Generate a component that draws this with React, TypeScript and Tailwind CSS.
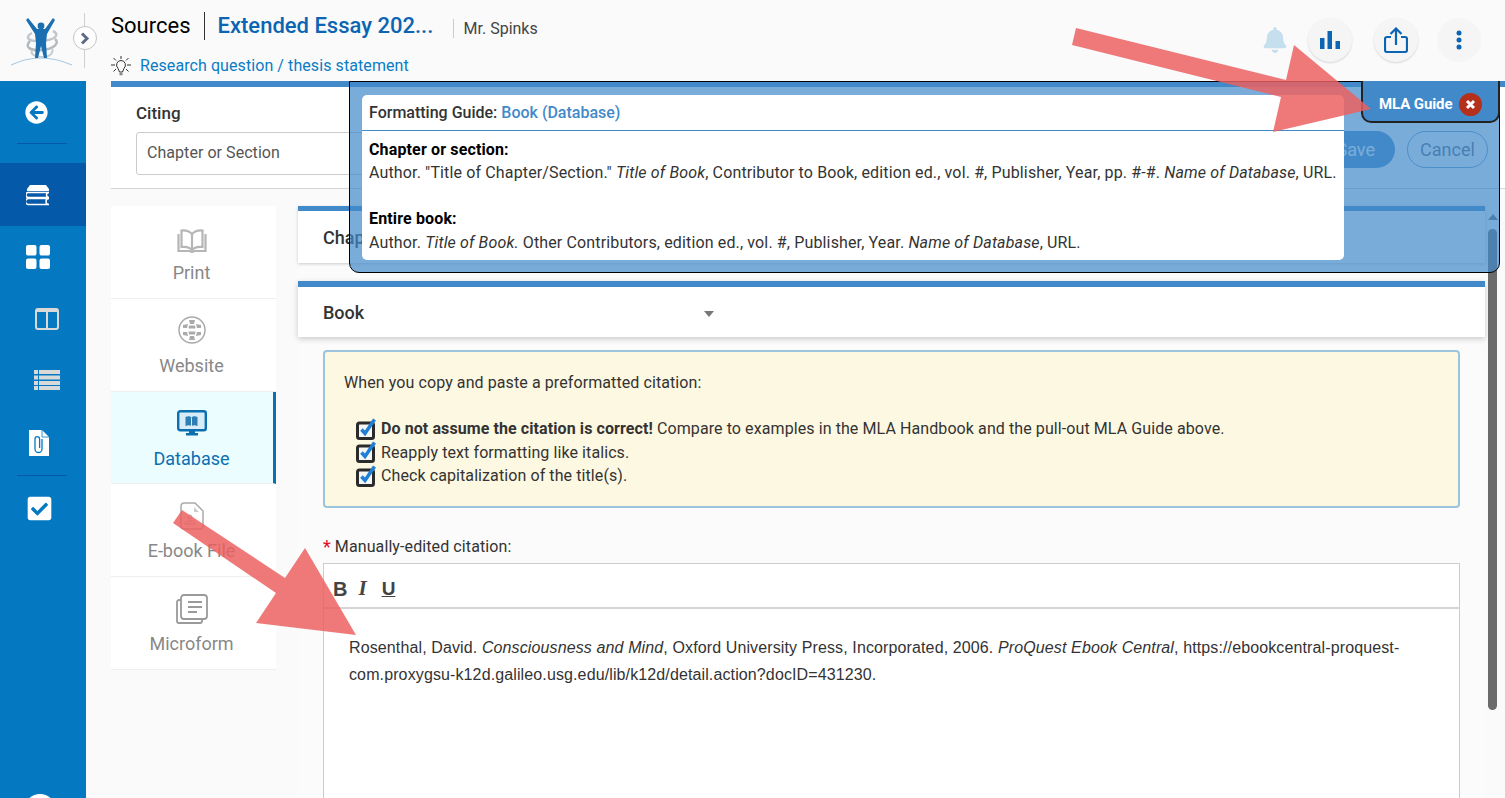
import { FaArrowCircleLeft, FaBell, FaCheckSquare } from 'react-icons/fa';

const Logo = () => (
    <svg width="64" height="50" viewBox="0 0 64 50" className="block">
        <path d="M1 48 Q30 34 62 48" fill="none" stroke="#a9cbe4" strokeWidth="1.200" />
        <path d="M22 16 C14 20 18 25 32 24 C46 23 50 17 43 14" fill="none" stroke="#c2c6ca" strokeWidth="2.500" />
        <path d="M20 24 C14 30 20 34 32 33 C44 32 50 26 45 22" fill="none" stroke="#b4b9bd" strokeWidth="2.500" />
        <path d="M22 33 C20 38 26 40 32 40 C40 40 44 36 42 31" fill="none" stroke="#c8ccd0" strokeWidth="2" />
        <circle cx="31" cy="9" r="3.400" fill="#1b6fb0" />
        <path d="M18 1 L27 12 L35 12 L43 1 L45 3 L37 17 L36 26 L37 41 L34 41 L31 29 L28 41 L25 41 L26 26 L25 17 L16 3 Z" fill="#1b6fb0" />
    </svg>
);

const Bulb = () => (
    <svg width="20" height="20" viewBox="0 0 20 20" fill="none" stroke="#333" strokeWidth="1" className="shrink-0">
        <path d="M10 0v3M0 9h4M16 9h4M2.500 2l2.500 2.500M17.500 2L15 4.500M2.500 15.500L5 13M17.500 15.500L15 13" />
        <path d="M10 4.500a4.500 4.500 0 0 0-3 7.800L8.500 16h3l1.500-3.700a4.500 4.500 0 0 0-3-7.800z" />
        <path d="M8.500 18h3" stroke="#888" strokeWidth="2.500" />
    </svg>
);

const Books = () => (
    <svg width="25" height="22" viewBox="0 0 25 22" fill="none" stroke="#fff">
        <path d="M4 1h16l3 4v2H1V5z" fill="#fff" stroke="none" />
        <path d="M2 8.500h21a2 2 0 0 0 0 5H3a2.500 2.500 0 0 1-1-5z" strokeWidth="1.500" />
        <path d="M3 14.500h20a2 2 0 0 0 0 6H2a3 3 0 0 1 1-6z" strokeWidth="1.500" />
    </svg>
);

const Grid = () => (
    <svg width="24" height="24" viewBox="0 0 24 24" fill="#fff">
        <rect x="0" y="0" width="10.500" height="10.500" rx="2" />
        <rect x="13.500" y="0" width="10.500" height="10.500" rx="2" />
        <rect x="0" y="13.500" width="10.500" height="10.500" rx="2" />
        <rect x="13.500" y="13.500" width="10.500" height="10.500" rx="2" />
    </svg>
);

const Columns = () => (
    <svg width="24" height="22" viewBox="0 0 24 22" fill="none" stroke="#d9d9d9" strokeWidth="2">
        <rect x="1" y="1" width="22" height="20" rx="2" />
        <path d="M12 1v20M1 3h22" />
    </svg>
);

const ListIcon = () => (
    <svg width="26" height="20" viewBox="0 0 26 20" fill="#d9d9d9">
        <rect x="0" y="0" width="4" height="4" />
        <rect x="5" y="0" width="21" height="4" />
        <rect x="0" y="5.500" width="4" height="4" />
        <rect x="5" y="5.500" width="21" height="4" />
        <rect x="0" y="11" width="4" height="4" />
        <rect x="5" y="11" width="21" height="4" />
        <rect x="0" y="16" width="4" height="4" />
        <rect x="5" y="16" width="21" height="4" />
    </svg>
);

const Attachment = () => (
    <svg width="20" height="26" viewBox="0 0 20 26">
        <path d="M0 0h13l7 7v19H0z" fill="#fff" />
        <path d="M13 0v7h7" fill="none" stroke="#0479c1" strokeWidth="0.800" />
        <path d="M13 9v10a3.500 3.500 0 0 1-7 0V9a2.300 2.300 0 0 1 4.600 0v9" fill="none" stroke="#0479c1" strokeWidth="1.300" />
    </svg>
);

const PrintIcon = () => (
    <svg width="30" height="24" viewBox="0 0 30 24" fill="none" stroke="#b5b5b5" strokeWidth="2.200" className="mt-[6px]">
        <path d="M15 5C12 2 8 1 4.500 1.500V18c4-.5 8 0 10.500 3 2.500-3 6.500-3.500 10.500-3V1.500C22 1 18 2 15 5z" />
        <path d="M15 5v16" />
        <path d="M1.500 5v17h11l2.500 1 2.500-1h11V5" />
    </svg>
);

const GlobeIcon = () => (
    <svg width="28" height="28" viewBox="0 0 28 28" fill="none" stroke="#aaa">
        <circle cx="14" cy="14" r="13" strokeWidth="1.500" />
        <g fill="#aaa" stroke="none">
            <path d="M11 4h6l-1 4h-4zM5 9l5-1-1 4H5zM23 9l-5-1 1 4h4zM11 9.500h6l.5 3h-7zM11 18.500h6l.5-3h-7zM5 19l5 1-1-4H5zM23 19l-5 1 1-4h4zM11 24h6l-1-4h-4z" />
        </g>
    </svg>
);

const DatabaseIcon = () => (
    <svg width="30" height="26" viewBox="0 0 30 26" fill="none">
        <rect x="1.200" y="1.200" width="27.600" height="19" rx="2" fill="#d7ecf6" stroke="#0b6fb0" strokeWidth="2.400" />
        <path d="M9 23h12v2.500H9zM12 20h6v3h-6z" fill="#0b6fb0" />
        <path d="M8.500 7c2-1 4.500-1 6 .5 1.500-1.500 4-1.500 6-.5v9c-2-1-4.500-1-6 0-1.500-1-4-1-6 0z" fill="#2f7db5" />
        <path d="M14.500 7.500V16" stroke="#d7ecf6" />
    </svg>
);

const EbookIcon = () => (
    <svg width="24" height="28" viewBox="0 0 24 28" fill="none" stroke="#aaa" strokeWidth="1.500">
        <path d="M4 1h11l8 8v15a3 3 0 0 1-3 3H4a3 3 0 0 1-3-3V4a3 3 0 0 1 3-3z" />
        <path d="M14 5v5h5z" fill="#ccc" stroke="none" />
        <circle cx="10" cy="15" r="2" strokeWidth="1" />
        <path d="M5 22c0-3 3-3 5-3s5 0 5 3z" strokeWidth="1" />
    </svg>
);

const MicroIcon = () => (
    <svg width="32" height="30" viewBox="0 0 32 30" fill="none" stroke="#9a9a9a" strokeWidth="1.800">
        <rect x="5" y="1" width="26" height="24" rx="3" fill="#fff" />
        <path d="M12 8h14M12 13h14M12 18h9" strokeWidth="2.200" />
        <path d="M5 6H3a2 2 0 0 0-2 2v19a2 2 0 0 0 2 2h21a2 2 0 0 0 2-2v-2" />
    </svg>
);

const Tick = () => (
    <svg width="21" height="22" viewBox="0 0 21 22" className="shrink-0">
        <rect x="1.500" y="5" width="16" height="15.500" rx="2" fill="#f4f7f4" stroke="#2b2b2b" strokeWidth="3" />
        <path d="M5.500 11.500l3.500 4 9.500-14" fill="none" stroke="#1f7fd6" strokeWidth="3.500" />
    </svg>
);

const Arrows = () => (
    <svg className="absolute inset-0 z-40 pointer-events-none" width="1505" height="798" viewBox="0 0 1505 798">
        <g fill="#ec5f5f" opacity="0.84">
            <polygon points="1076,28 1286,80 1294,45 1371,109 1273,132 1281,97 1072,45" />
            <polygon points="182,510 285,578 305,548 356,635 256,623 276,593 173,523" />
        </g>
    </svg>
);

const sources = [
    { label: 'Print', icon: <PrintIcon />, active: false },
    { label: 'Website', icon: <GlobeIcon />, active: false },
    { label: 'Database', icon: <DatabaseIcon />, active: true },
    { label: 'E-book File', icon: <EbookIcon />, active: false },
    { label: 'Microform', icon: <MicroIcon />, active: false },
];

const Sidebar = () => (
    <aside className="w-[86px] h-[717px] shrink-0 bg-[#0479c1] flex flex-col overflow-hidden">
        <div className="h-[63px] w-[50px] ml-[17px] border-b border-[#0459a8] flex items-center justify-center pr-[12px] shrink-0">
            <FaArrowCircleLeft className="w-[23px] h-[23px] text-white" />
        </div>
        <div className="h-[63px] mt-[19px] bg-[#0459a8] flex items-center justify-center pr-[10px] shrink-0">
            <Books />
        </div>
        <div className="h-[62px] flex items-center justify-center pr-[10px] shrink-0"><Grid /></div>
        <div className="h-[61px] flex items-center justify-center pl-2 shrink-0"><Columns /></div>
        <div className="h-[61px] flex items-center justify-center pl-2 shrink-0"><ListIcon /></div>
        <div className="h-[65px] flex items-center justify-center pr-2 shrink-0"><Attachment /></div>
        <div className="h-px w-[50px] ml-[17px] bg-[#0459a8] shrink-0" />
        <div className="h-[65px] flex items-center justify-center pr-2 shrink-0">
            <FaCheckSquare className="w-[27px] h-[27px] text-white" />
        </div>
        <div className="w-[32px] h-[32px] rounded-full bg-white ml-[24px] mt-[253px] shrink-0" />
    </aside>
);

const Header = () => (
    <header className="h-[81px] flex relative bg-[#fafafa]">
        <div className="w-[85px] h-[55px] mt-[13px] border-r border-[#cfcfcf] shrink-0 pl-[10px] pt-[4px]">
            <Logo />
        </div>
        <div className="absolute left-[73px] top-[26px] w-[24px] h-[24px] rounded-full bg-white border border-[#c4c4c4] flex items-center justify-center">
            <svg width="10" height="13" viewBox="0 0 10 13"><path d="M2 1.500l5 5-5 5" fill="none" stroke="#5d6b85" strokeWidth="3" /></svg>
        </div>
        <div className="ml-[26px] pt-[12px]">
            <div className="flex items-center h-[28px]">
                <span className="text-[22px] text-black leading-none">Sources</span>
                <span className="w-px h-[28px] bg-[#333] ml-[13px] mr-[13px]" />
                <span className="text-[22px] leading-none font-medium text-[#0b65b2] w-[217px]">Extended Essay 202...</span>
                <span className="w-px h-[19px] bg-[#ccc] ml-[18px] mr-[10px] mt-[5px]" />
                <span className="text-[16px] text-[#444] mt-[5px]">Mr. Spinks</span>
            </div>
            <div className="flex items-center mt-[14px] h-[24px]">
                <Bulb />
                <span className="text-[16px] text-[#0b7cc4] ml-[9px] tracking-[0.08px]">Research question / thesis statement</span>
            </div>
        </div>
        <div className="ml-auto flex items-center h-[80px] pr-[24px]">
            <div className="w-[44px] h-[44px] rounded-full flex items-center justify-center">
                <FaBell className="w-[26px] h-[26px] text-[#c5dfee]" />
            </div>
            <div className="w-[44px] h-[44px] ml-[11px] rounded-full bg-[#f5f5f6] shadow-[0_1px_2px_rgba(0,0,0,0.15)] flex items-center justify-center">
                <svg width="20" height="18" viewBox="0 0 20 18" fill="#0b65b2"><rect x="0" y="7" width="4.500" height="11" /><rect x="7.500" y="0" width="4.500" height="18" /><rect x="15.500" y="10" width="4.500" height="8" /></svg>
            </div>
            <div className="w-[44px] h-[44px] ml-[22px] rounded-full bg-[#f5f5f6] shadow-[0_1px_2px_rgba(0,0,0,0.15)] flex items-center justify-center">
                <svg width="24" height="26" viewBox="0 0 24 26" fill="none" stroke="#0b65b2" strokeWidth="2.200"><path d="M7 10H3a2 2 0 0 0-2 2v11a2 2 0 0 0 2 2h18a2 2 0 0 0 2-2V12a2 2 0 0 0-2-2h-4" /><path d="M12 18V2M6.500 7L12 1.500 17.500 7" /></svg>
            </div>
            <div className="w-[44px] h-[44px] ml-[19px] rounded-full bg-[#f5f5f6] flex items-center justify-center">
                <svg width="6" height="20" viewBox="0 0 6 20" fill="#0b65b2"><circle cx="3" cy="3" r="2.500" /><circle cx="3" cy="10" r="2.500" /><circle cx="3" cy="17" r="2.500" /></svg>
            </div>
        </div>
    </header>
);

const SourceTabs = () => (
    <div className="w-[165px] mt-[17px] shrink-0 flex flex-col">
        {sources.map((s) => (
            <div
                key={s.label}
                className={
                    s.active
                        ? 'h-[92.750px] bg-[#ecfdff] border-b border-[#eeeeee] border-r-[3px] border-r-[#0b6fb0] flex flex-col items-center pr-[1px]'
                        : 'h-[92.750px] bg-white border-b border-[#eeeeee] flex flex-col items-center pr-[4px]'
                }
            >
                <div className="h-[55px] pt-[8px] flex items-center justify-center">{s.icon}</div>
                <span className={s.active ? 'text-[18px] leading-[24px] text-[#0b6fb0]' : 'text-[18px] leading-[24px] text-[#888888]'}>{s.label}</span>
            </div>
        ))}
    </div>
);

const Citation = () => (
    <div className="flex-1 min-w-0 mt-[17px] ml-[22px] flex relative">
        <div className="w-[1187px] shrink-0 bg-[#fbfbfb] h-[593px]">
            <div className="border-t-[5px] border-[#4289c9] bg-white h-[57px] shadow-[0_1px_3px_rgba(0,0,0,0.2)] pl-[25px] flex items-center">
                <span className="text-[18px] font-medium text-[#333]">Chapter or Section</span>
            </div>
            <div className="mt-[18px] border-t-[6px] border-[#4289c9] bg-white h-[56px] shadow-[0_2px_6px_rgba(0,0,0,0.2)] pl-[25px] flex items-center">
                <span className="text-[18px] font-medium text-[#333] w-[381px]">Book</span>
                <span className="w-0 h-0 border-x-[5px] border-x-transparent border-t-[6px] border-t-[#777] mt-[3px]" />
            </div>
            <div className="ml-[25px] w-[1137px] mt-[13px] h-[158px] rounded-[4px] border-2 border-[#9cc4dc] bg-[#fdf8e1] pl-[19px] pt-[19px] text-[16px] text-[#333] tracking-[0.09px]">
                <p className="leading-[24px]">When you copy and paste a preformatted citation:</p>
                <div className="mt-[22px] ml-[12px] leading-[23.500px]">
                    <div className="flex items-center gap-[4px]"><Tick /><span><b className="font-bold">Do not assume the citation is correct!</b> Compare to examples in the MLA Handbook and the pull-out MLA Guide above.</span></div>
                    <div className="flex items-center gap-[4px]"><Tick /><span>Reapply text formatting like italics.</span></div>
                    <div className="flex items-center gap-[4px]"><Tick /><span>Check capitalization of the title(s).</span></div>
                </div>
            </div>
            <div className="ml-[25px] mt-[27px] h-[24px] text-[16px] text-[#333] flex items-center gap-[4px] tracking-[0.1px]">
                <span className="text-[#e0102a] text-[18px] leading-none">*</span>
                <span>Manually-edited citation:</span>
            </div>
            <div className="ml-[25px] w-[1137px] mt-[4px] h-[262px] border border-[#cccccc] bg-white">
                <div className="h-[45px] border-b-2 border-[#d4d4d4] pl-[9px] pt-[6px] flex items-center gap-[11px] text-[#444] font-['Liberation_Sans',Arial,sans-serif]">
                    <span className="font-bold text-[20px] leading-none">B</span>
                    <span className="font-bold italic text-[21px] leading-none font-['Liberation_Serif',serif]">I</span>
                    <span className="font-bold text-[19px] leading-none underline ml-[4px]">U</span>
                </div>
                <p className="px-[25px] pt-[25px] text-[16px] leading-[27px] text-[#333] tracking-[0.12px] font-['Liberation_Sans',Arial,sans-serif]">
                    Rosenthal, David. <i>Consciousness and Mind</i>, Oxford University Press, Incorporated, 2006. <i>ProQuest Ebook Central</i>, https://ebookcentral-proquest-com.proxygsu-k12d.galileo.usg.edu/lib/k12d/detail.action?docID=431230.
                </p>
            </div>
        </div>
        <div className="ml-[3px] w-[9px] shrink-0 flex flex-col items-center pt-[8px]">
            <span className="w-0 h-0 border-x-[5px] border-x-transparent border-b-[6px] border-b-[#6b6b6b]" />
            <span className="w-[9px] h-[481px] mt-[9px] rounded-full bg-[#6b6b6b]" />
        </div>
    </div>
);

const GuideOverlay = () => (
    <div className="absolute left-[349px] top-[81px] w-[1151px] h-[192px] z-30 bg-[#4289c9]/70 border border-black rounded-b-[10px]">
        <div className="absolute left-[12px] top-[13px] w-[982px] h-[165px] bg-white rounded-[5px] text-[16px] text-[#333]">
            <div className="h-[36px] border-b border-[#4289c9] pl-[7px] flex items-center font-medium">
                Formatting Guide:&nbsp;<span className="text-[#4289c9]">Book (Database)</span>
            </div>
            <div className="pl-[7px] pt-[7px] leading-[23px] tracking-[0.14px]">
                <p className="font-bold text-black">Chapter or section:</p>
                <p>Author. "Title of Chapter/Section." <i>Title of Book</i>, Contributor to Book, edition ed., vol. #, Publisher, Year, pp. #-#. <i>Name of Database</i>, URL.</p>
                <p className="font-bold text-black mt-[23px]">Entire book:</p>
                <p className="mt-[1px]">Author. <i>Title of Book.</i> Other Contributors, edition ed., vol. #, Publisher, Year. <i>Name of Database</i>, URL.</p>
            </div>
        </div>
        <div className="absolute -right-px -top-px w-[139px] h-[42px] bg-[#4289c9] border-2 border-t-0 border-[#222] rounded-b-[10px] flex items-center pl-[16px] pt-[6px] gap-[7px]">
            <span className="text-[15px] font-bold text-white whitespace-nowrap tracking-[-0.1px]">MLA Guide</span>
            <span className="w-[23px] h-[23px] rounded-full bg-[#b5301a] flex items-center justify-center">
                <svg width="11" height="11" viewBox="0 0 11 11"><path d="M2 2l7 7M9 2l-7 7" stroke="#fff" strokeWidth="3" /></svg>
            </span>
        </div>
    </div>
);

export default function App() {
    return (
        <div className="relative w-[1505px] h-[798px] overflow-hidden bg-[#fafafa] font-['Roboto',sans-serif]">
            <Header />
            <div className="flex">
                <Sidebar />
                <main className="flex-1 min-w-0 ml-[25px]">
                    <div className="h-[108px] bg-white border-t-[6px] border-b border-t-[#4289c9] border-b-[#d4d4d4] pl-[25px] pt-[14px] flex">
                        <div>
                            <div className="text-[17px] font-medium text-[#333] leading-[24px]">Citing</div>
                            <div className="mt-[7px] w-[340px] h-[43px] border border-[#cccccc] rounded-[3px] pl-[10px] pb-[2px] flex items-center text-[16px] text-[#555] tracking-[0.05px]">Chapter or Section</div>
                        </div>
                        <div className="ml-auto flex items-start gap-[12px] pt-[30px] pr-[17px]">
                            <span className="h-[37px] w-[88px] rounded-full bg-[#4289c9] text-white text-[18px] flex items-center justify-end pr-[20px]">Save</span>
                            <span className="h-[37px] w-[81px] rounded-full border border-[#5f9ccf] bg-white text-[18px] text-[#556a85] flex items-center justify-center">Cancel</span>
                        </div>
                    </div>
                    <div className="flex">
                        <SourceTabs />
                        <Citation />
                    </div>
                </main>
            </div>
            <GuideOverlay />
            <Arrows />
        </div>
    );
}
